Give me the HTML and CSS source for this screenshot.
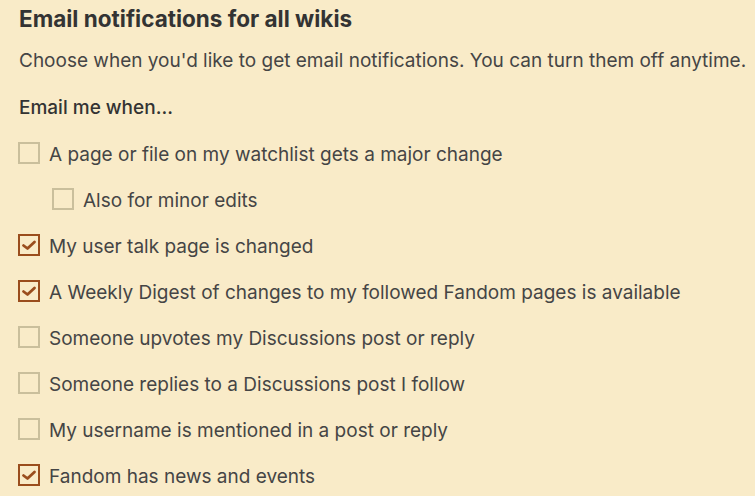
FILE: index.html
```html
<!DOCTYPE html>
<html lang="en">
<head>
<meta charset="utf-8">
<link rel="stylesheet" href="styles.css">
</head>
<body>
<section class="prefs">
  <h2 class="title">Email notifications for all wikis</h2>
  <p class="desc">Choose when you'd like to get email notifications. You can turn them off anytime.</p>
  <h3 class="sub">Email me when...</h3>
  <ul class="list">
    <li class="row"><span class="box"></span><span class="label">A page or file on my watchlist gets a major change</span></li>
    <li class="row nested"><span class="box"></span><span class="label">Also for minor edits</span></li>
    <li class="row"><span class="box checked"><svg viewBox="0 0 18 18" class="tick"><path d="M3.5 9.5 L7.5 12.5 L14.5 6"/></svg></span><span class="label">My user talk page is changed</span></li>
    <li class="row"><span class="box checked"><svg viewBox="0 0 18 18" class="tick"><path d="M3.5 9.5 L7.5 12.5 L14.5 6"/></svg></span><span class="label">A Weekly Digest of changes to my followed Fandom pages is available</span></li>
    <li class="row"><span class="box"></span><span class="label">Someone upvotes my Discussions post or reply</span></li>
    <li class="row"><span class="box"></span><span class="label">Someone replies to a Discussions post I follow</span></li>
    <li class="row"><span class="box"></span><span class="label">My username is mentioned in a post or reply</span></li>
    <li class="row"><span class="box checked"><svg viewBox="0 0 18 18" class="tick"><path d="M3.5 9.5 L7.5 12.5 L14.5 6"/></svg></span><span class="label">Fandom has news and events</span></li>
  </ul>
</section>
</body>
</html>
```
FILE: styles.css
```css
html, body {
  margin: 0;
  padding: 0;
  background: #f9ebc8;
}
body {
  font-family: Inter, "Noto Sans", sans-serif;
  color: #3a3a3a;
  overflow: hidden;
}
.prefs {
  padding: 4px 0 0 19px;
}
.title {
  margin: 0;
  font-size: 22.5px;
  line-height: 30px;
  font-weight: 700;
  color: #333;
}
.desc {
  margin: 15px 0 0;
  font-size: 19px;
  line-height: 24px;
  color: #454545;
  white-space: nowrap;
}
.sub {
  margin: 23px 0 0;
  font-size: 19px;
  line-height: 24px;
  font-weight: 500;
  color: #333;
}
.list {
  list-style: none;
  margin: 10px 0 0;
  padding: 0;
}
.row {
  display: flex;
  align-items: center;
  gap: 9px;
  height: 46px;
  margin-left: -1px;
}
.row.nested {
  margin-left: 33px;
}
.label {
  font-size: 19px;
  color: #454545;
  padding-top: 3px;
  white-space: nowrap;
}
.box {
  box-sizing: border-box;
  width: 22px;
  height: 22px;
  border: 2px solid #cabf9c;
  flex: none;
  display: flex;
}
.box.checked {
  border-color: #9a4d1d;
}
.tick {
  width: 18px;
  height: 18px;
}
.tick path {
  fill: none;
  stroke: #9a4d1d;
  stroke-width: 2.8;
  stroke-linecap: round;
  stroke-linejoin: round;
}
```
